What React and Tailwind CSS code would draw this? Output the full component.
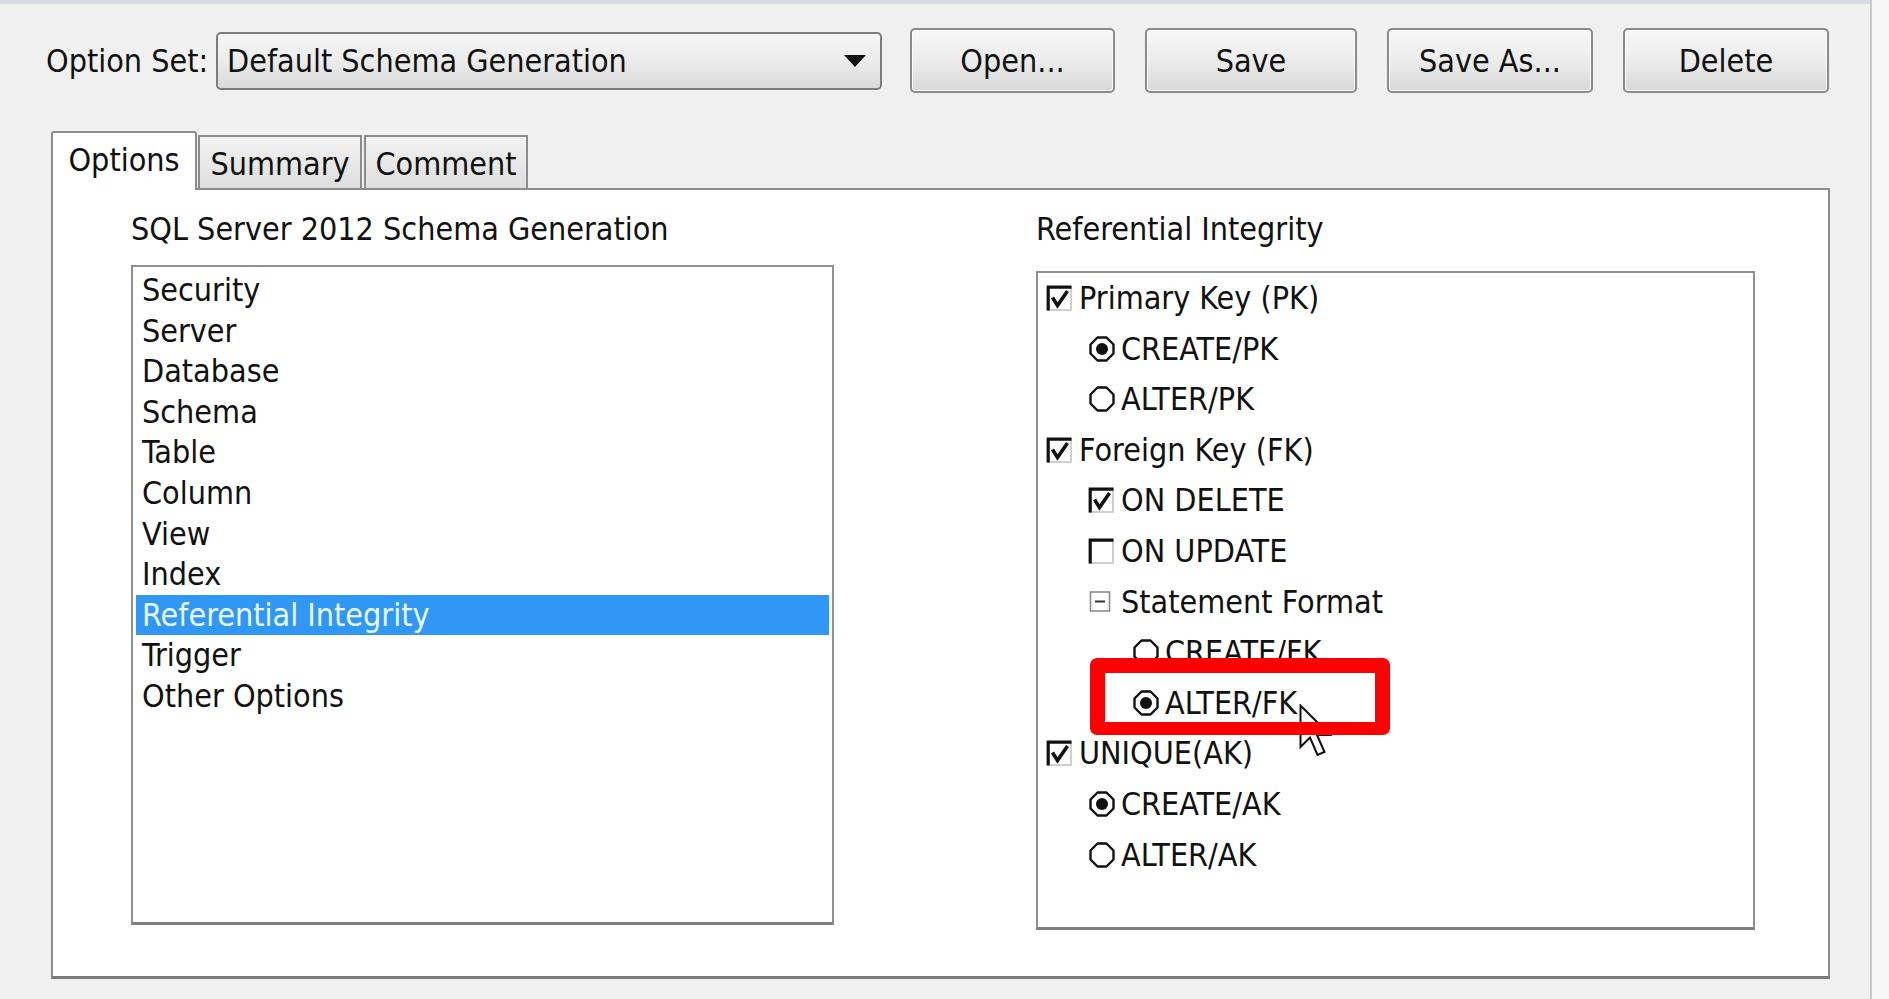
import React from 'react';

const font = "font-['DejaVu_Sans_Condensed','DejaVu_Sans',sans-serif]";

const listItems = [
  'Security',
  'Server',
  'Database',
  'Schema',
  'Table',
  'Column',
  'View',
  'Index',
  'Referential Integrity',
  'Trigger',
  'Other Options',
];

const riItems = [
  { t: 'Primary Key (PK)', k: 'cb', on: true, lv: 0 },
  { t: 'CREATE/PK', k: 'rd', on: true, lv: 1 },
  { t: 'ALTER/PK', k: 'rd', on: false, lv: 1 },
  { t: 'Foreign Key (FK)', k: 'cb', on: true, lv: 0 },
  { t: 'ON DELETE', k: 'cb', on: true, lv: 1 },
  { t: 'ON UPDATE', k: 'cb', on: false, lv: 1 },
  { t: 'Statement Format', k: 'minus', lv: 1 },
  { t: 'CREATE/FK', k: 'rd', on: false, lv: 2 },
  { t: 'ALTER/FK', k: 'rd', on: true, lv: 2 },
  { t: 'UNIQUE(AK)', k: 'cb', on: true, lv: 0 },
  { t: 'CREATE/AK', k: 'rd', on: true, lv: 1 },
  { t: 'ALTER/AK', k: 'rd', on: false, lv: 1 },
];

const indent = ['pl-[8px]', 'pl-[50px]', 'pl-[94px]'];

function CheckBox({ on }) {
  return (
    <svg width="27" height="27" viewBox="0 0 27 27">
      <rect x="2" y="2" width="23" height="23" fill="#fff" stroke="#c4c4c4" strokeWidth="1.6" />
      <path d="M2.2 25.5 V2.2 H25.5" fill="none" stroke="#111" strokeWidth="3.2" />
      {on && <path d="M6.5 12.5 L11.5 20.5 L21.5 6" fill="none" stroke="#111" strokeWidth="3.6" strokeLinejoin="miter" />}
    </svg>
  );
}

function Radio({ on }) {
  return (
    <svg width="28" height="28" viewBox="0 0 28 28">
      <path
        d="M9.5 2.5 H18.5 L25.5 9.5 V18.5 L18.5 25.5 H9.5 L2.5 18.5 V9.5 Z"
        fill="#fff"
        stroke="#111"
        strokeWidth="2.4"
        strokeLinejoin="round"
      />
      {on && <circle cx="14" cy="14" r="6" fill="#111" />}
    </svg>
  );
}

function MinusBox() {
  return (
    <svg width="28" height="28" viewBox="0 0 28 28">
      <rect x="2.5" y="4" width="19" height="19" fill="#fff" stroke="#8c8c8c" strokeWidth="1.6" />
      <path d="M7 13.5 H17" stroke="#333" strokeWidth="2" />
    </svg>
  );
}

function Btn({ w, children }) {
  return (
    <div
      className={`${w} h-[65px] flex items-center justify-center rounded-[5px] border-2 border-[#8a8a8a] bg-linear-to-b from-[#f7f7f7] via-[#ececec] to-[#d8d8d8] shadow-[inset_0_0_0_1px_#fbfbfb] text-[32px] text-[#111]`}
    >
      {children}
    </div>
  );
}

export default function App() {
  return (
    <div className={`relative w-[1889px] h-[999px] bg-[#f0f0f0] overflow-hidden flex ${font} text-[#111]`}>
      <div className="w-[1870px] flex flex-col">
        <div className="h-[4px] bg-[#d6dae2]" />

        {/* option set bar */}
        <div className="mt-[24px] h-[65px] flex items-center pl-[46px]">
          <span className="text-[32px] w-[170px]">Option Set:</span>
          <div className="w-[666px] h-[58px] flex items-center justify-between pl-[9px] pr-[14px] rounded-[5px] border-2 border-[#7c7c7c] bg-linear-to-b from-[#f6f6f6] via-[#ececec] to-[#d9d9d9] text-[32px]">
            <span>Default Schema Generation</span>
            <svg width="22" height="12" viewBox="0 0 22 12">
              <path d="M0 0 H22 L11 12 Z" fill="#111" />
            </svg>
          </div>
          <div className="ml-[28px] flex items-center gap-[30px]">
            <Btn w="w-[205px]">Open...</Btn>
            <Btn w="w-[212px]">Save</Btn>
            <Btn w="w-[206px]">Save As...</Btn>
            <Btn w="w-[206px]">Delete</Btn>
          </div>
        </div>

        {/* tabs */}
        <div className="mt-[38px] ml-[51px] flex items-end h-[57px]">
          <div className="relative z-10 w-[146px] h-[59px] -mb-[2px] pb-[4px] flex items-center justify-center bg-white border-2 border-b-0 border-[#8c8c8c] rounded-t-[3px] text-[32px]">
            Options
          </div>
          <div className="w-[164px] h-[53px] ml-[1px] flex items-center justify-center pt-[2px] bg-linear-to-b from-[#f2f2f2] to-[#dedede] border-2 border-b-0 border-[#8c8c8c] text-[32px]">
            Summary
          </div>
          <div className="w-[164px] h-[53px] ml-[2px] flex items-center justify-center pt-[2px] bg-linear-to-b from-[#f2f2f2] to-[#dedede] border-2 border-b-0 border-[#8c8c8c] text-[32px]">
            Comment
          </div>
        </div>

        {/* panel */}
        <div className="ml-[51px] w-[1779px] h-[791px] bg-white border-2 border-[#8c8c8c] border-b-[3px] border-b-[#7a7a7a] pt-[19px] pl-[78px] flex">
          <div className="w-[703px] flex flex-col">
            <div className="h-[40px] leading-[40px] text-[32px]">SQL Server 2012 Schema Generation</div>
            <div className="mt-[16px] h-[660px] border-2 border-[#909090] border-b-[3px] border-b-[#7d7d7d] pt-[3px] px-[3px]">
              {listItems.map((it) => {
                const sel = it === 'Referential Integrity';
                return (
                  <div
                    key={it}
                    className={`h-[40.6px] leading-[40.6px] pl-[6px] text-[32px] ${sel ? 'bg-[#3197f7] text-[#e9f7ff]' : ''}`}
                  >
                    {it}
                  </div>
                );
              })}
            </div>
          </div>

          <div className="ml-[202px] w-[719px] flex flex-col">
            <div className="h-[40px] leading-[40px] text-[32px]">Referential Integrity</div>
            <div className="mt-[22px] h-[659px] border-2 border-[#909090] border-b-[3px] border-b-[#7d7d7d]">
              {riItems.map((it) => (
                <div key={it.t} className={`h-[50.6px] flex items-center gap-[5px] ${indent[it.lv]}`}>
                  <span className="w-[28px] h-[28px] flex items-center">
                    {it.k === 'cb' && <CheckBox on={it.on} />}
                    {it.k === 'rd' && <Radio on={it.on} />}
                    {it.k === 'minus' && <MinusBox />}
                  </span>
                  <span className="text-[32px] leading-[50.6px]">{it.t}</span>
                </div>
              ))}
            </div>
          </div>
        </div>
      </div>
      <div className="flex-1 border-l-2 border-[#c9c9c9] bg-[#f6f6f6]" />

      {/* mouse pointer */}
      <svg className="absolute left-[1299px] top-[704px]" width="34" height="54" viewBox="0 0 34 54">
        <path
          d="M1.5 1.5 L1.5 43 L11 33.5 L18.5 51 L25.5 48 L18 31 L31 31 Z"
          fill="#fff"
          stroke="#111"
          strokeWidth="2"
          strokeLinejoin="miter"
        />
      </svg>

      {/* red highlight annotation */}
      <div className="absolute left-[1090px] top-[658px] w-[300px] h-[77px] border-[15px] border-b-[13px] border-[#ff0000] rounded-[7px]" />
    </div>
  );
}
